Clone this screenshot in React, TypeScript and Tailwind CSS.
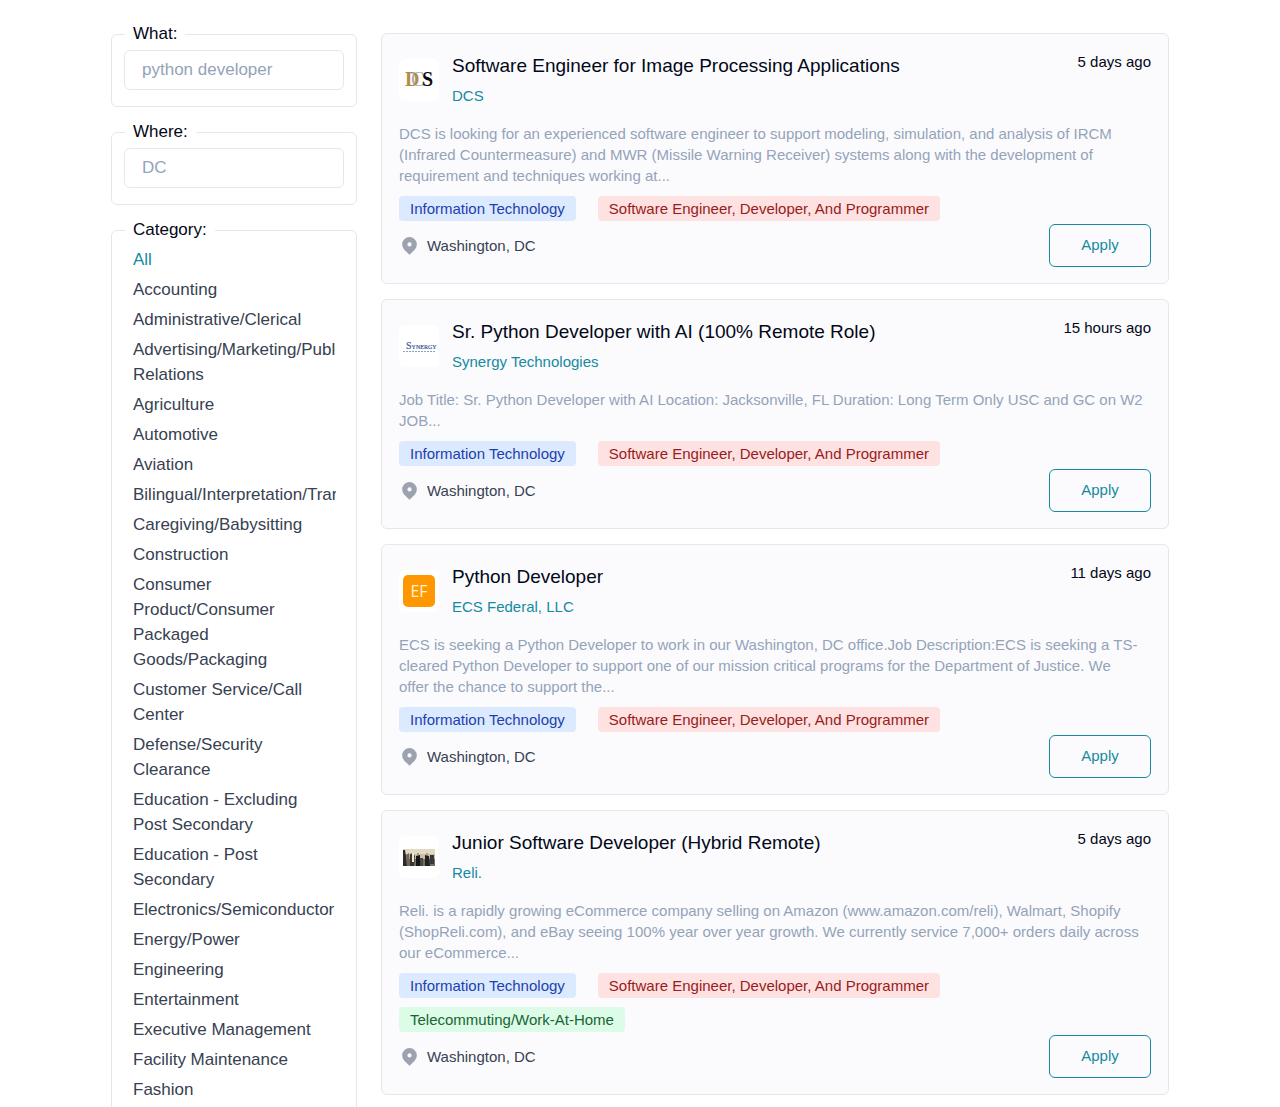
import type { ReactNode } from "react";

type Tone = "blue" | "red" | "green";

interface Job {
  title: string;
  company: string;
  age: string;
  summary: string;
  tags: { label: string; tone: Tone }[];
  location: string;
  logo: ReactNode;
}

const toneClass: Record<Tone, string> = {
  blue: "bg-[#dbeafe] text-[#1e40af]",
  red: "bg-[#fee2e2] text-[#991b1b]",
  green: "bg-[#dcfce7] text-[#166534]",
};

const categories = [
  "All",
  "Accounting",
  "Administrative/Clerical",
  "Advertising/Marketing/Public Relations",
  "Agriculture",
  "Automotive",
  "Aviation",
  "Bilingual/Interpretation/Translation",
  "Caregiving/Babysitting",
  "Construction",
  "Consumer Product/Consumer Packaged Goods/Packaging",
  "Customer Service/Call Center",
  "Defense/Security Clearance",
  "Education - Excluding Post Secondary",
  "Education - Post Secondary",
  "Electronics/Semiconductor",
  "Energy/Power",
  "Engineering",
  "Entertainment",
  "Executive Management",
  "Facility Maintenance",
  "Fashion",
];

function DcsLogo() {
  return (
    <svg viewBox="0 0 40 42" className="h-[42px] w-10" aria-label="DCS logo" role="img">
      <g fontFamily="'Liberation Serif', serif" fontWeight="bold" fontSize="20">
        <text x="6" y="27" fill="#b08d4c">D</text>
        <text x="12" y="27" fill="#8f949a" fillOpacity="0.8" fontWeight="normal">C</text>
        <text x="23" y="27" fill="#0b0b0b">S</text>
      </g>
    </svg>
  );
}

function SynergyLogo() {
  return (
    <svg viewBox="0 0 40 42" className="h-[42px] w-10" aria-label="Synergy logo" role="img">
      <text x="7" y="24" fontSize="10" fontFamily="'Liberation Serif', serif" fill="#3d5a96" stroke="#3d5a96" strokeWidth="0.2">
        S<tspan fontSize="6">YNERGY</tspan>
      </text>
      <path d="M4 26.500H36" stroke="#8ea0c6" strokeDasharray="2 1" />
    </svg>
  );
}

function EfLogo() {
  return (
    <svg viewBox="0 0 40 42" className="h-[42px] w-10" aria-label="EF logo" role="img">
      <rect x="4" y="5" width="32" height="32" rx="5" fill="#ff9800" />
      <text x="20" y="27" fontSize="16" textAnchor="middle" fontFamily="'Open Sans', sans-serif" fill="#fff3d6">EF</text>
    </svg>
  );
}

function PhotoLogo() {
  return (
    <svg viewBox="0 0 40 42" className="h-[42px] w-10" aria-label="Reli. team" role="img">
      <rect x="4" y="13" width="32" height="17" fill="#cbbfa6" />
      <rect x="4" y="13" width="32" height="5" fill="#e2d9c4" />
      <rect x="4" y="23" width="32" height="7" fill="#77705f" />
      <path d="M4 14h2l1 6 1 10H4z" fill="#2b2a27" />
      <path d="M7 19l3-2 1 13H8z" fill="#6f6655" />
      <path d="M11 18l3-1 2 3-1 10h-4z" fill="#39352f" />
      <path d="M13 17h2v9h-2z" fill="#eee9dc" />
      <path d="M17 20l4-1v11h-4z" fill="#161718" />
      <path d="M21 22h3v8h-3z" fill="#4d483f" />
      <path d="M26 19l4 1 1 10h-5z" fill="#1f2224" />
      <path d="M31 19h4v9h-4z" fill="#35393a" />
      <circle cx="19" cy="18" r="1" fill="#a98a6c" />
      <circle cx="28" cy="18" r="1" fill="#a98a6c" />
    </svg>
  );
}

function PinIcon() {
  return (
    <svg viewBox="0 0 20 20" fill="#9ca3af" className="h-[21px] w-[21px] shrink-0" aria-hidden="true">
      <path
        fillRule="evenodd"
        clipRule="evenodd"
        d="M5.050 4.050a7 7 0 119.900 9.900L10 18.900l-4.950-4.950a7 7 0 010-9.900zM10 11a2 2 0 100-4 2 2 0 000 4z"
      />
    </svg>
  );
}

const it = { label: "Information Technology", tone: "blue" as Tone };
const dev = { label: "Software Engineer, Developer, And Programmer", tone: "red" as Tone };

const jobs: Job[] = [
  {
    title: "Software Engineer for Image Processing Applications",
    company: "DCS",
    age: "5 days ago",
    summary:
      "DCS is looking for an experienced software engineer to support modeling, simulation, and analysis of IRCM (Infrared Countermeasure) and MWR (Missile Warning Receiver) systems along with the development of requirement and techniques working at...",
    tags: [it, dev],
    location: "Washington, DC",
    logo: <DcsLogo />,
  },
  {
    title: "Sr. Python Developer with AI (100% Remote Role)",
    company: "Synergy Technologies",
    age: "15 hours ago",
    summary:
      "Job Title: Sr. Python Developer with AI Location: Jacksonville, FL Duration: Long Term Only USC and GC on W2 JOB...",
    tags: [it, dev],
    location: "Washington, DC",
    logo: <SynergyLogo />,
  },
  {
    title: "Python Developer",
    company: "ECS Federal, LLC",
    age: "11 days ago",
    summary:
      "ECS is seeking a Python Developer to work in our Washington, DC office.Job Description:ECS is seeking a TS-cleared Python Developer to support one of our mission critical programs for the Department of Justice. We offer\u00a0the chance to support the...",
    tags: [it, dev],
    location: "Washington, DC",
    logo: <EfLogo />,
  },
  {
    title: "Junior Software Developer (Hybrid Remote)",
    company: "Reli.",
    age: "5 days ago",
    summary:
      "Reli. is a rapidly growing eCommerce company selling on Amazon (www.amazon.com/reli), Walmart, Shopify (ShopReli.com), and eBay seeing 100% year over year growth. We currently service 7,000+ orders daily across our eCommerce...",
    tags: [it, dev, { label: "Telecommuting/Work-At-Home", tone: "green" }],
    location: "Washington, DC",
    logo: <PhotoLogo />,
  },
];

function SearchField({ id, label, placeholder }: { id: string; label: string; placeholder: string }) {
  return (
    <fieldset className="min-w-0 rounded-md border border-gray-200 px-3 pb-4">
      <legend className="ml-px px-2 leading-[26px] text-[#020817]">
        <label htmlFor={id}>{label}</label>
      </legend>
      <input
        id={id}
        type="text"
        placeholder={placeholder}
        className="mt-[3px] block h-10 w-full rounded-md border border-gray-200 px-[17px] text-slate-700 placeholder:text-[#94a3b8]"
      />
    </fieldset>
  );
}

function JobCard({ job }: { job: Job }) {
  return (
    <article className="rounded-md border border-gray-200 bg-[#fbfbfe] px-[17px] pt-[18px] pb-4">
      <header className="flex items-start">
        <div className="mt-[7px] shrink-0 overflow-hidden rounded-md bg-white">{job.logo}</div>
        <div className="ml-[13px] min-w-0 flex-1">
          <h2 className="text-[19px] leading-7 text-[#020817]">{job.title}</h2>
          <a href="#" className="mt-[5px] block w-fit text-[15px] leading-[21px] text-[#168a9e]">
            {job.company}
          </a>
        </div>
        <time className="-mt-px text-[15px] leading-[21px] text-[#020817]">{job.age}</time>
      </header>
      <p className="mt-[17px] text-[15px] leading-[21px] text-[#94a3b8]">{job.summary}</p>
      <ul className="mt-[10px] flex flex-wrap gap-x-[22px] gap-y-[9px] text-[15px] leading-[25px]">
        {job.tags.map((tag) => (
          <li key={tag.label} className={`rounded px-[11px] ${toneClass[tag.tone]}`}>
            {tag.label}
          </li>
        ))}
      </ul>
      <footer className="mt-[3px] flex items-center justify-between">
        <p className="flex items-center gap-[7px] text-[15px] leading-[21px] text-[#374151]">
          <PinIcon />
          {job.location}
        </p>
        <button
          type="button"
          className="h-[43px] w-[102px] rounded-md border border-[#168a9e] text-[15px] text-[#168a9e]"
        >
          Apply
        </button>
      </footer>
    </article>
  );
}

export default function App() {
  return (
    <div className="h-screen overflow-hidden bg-white font-['Liberation_Sans',Arial,sans-serif] text-[17px]">
      <main className="mx-auto flex max-w-[1058px] items-start gap-6">
        <aside className="w-[246px] shrink-0 space-y-3 pt-[21px]">
          <SearchField id="what" label="What:" placeholder="python developer" />
          <SearchField id="where" label="Where:" placeholder="DC" />
          <fieldset className="min-w-0 rounded-md border border-gray-200 pr-5 pb-16 pl-[21px]">
            <legend className="-ml-2 px-2 leading-[26px] text-[#020817]">Category:</legend>
            <ul className="mt-1 space-y-[5px] overflow-hidden leading-[25px] text-[#374151]">
              {categories.map((name) => (
                <li key={name}>
                  <a href="#" className={name === "All" ? "text-[#168a9e]" : ""}>
                    {name}
                  </a>
                </li>
              ))}
            </ul>
          </fieldset>
        </aside>
        <section className="min-w-0 flex-1 space-y-[15px] pt-[33px]" aria-label="Jobs">
          {jobs.map((job) => (
            <JobCard key={job.title} job={job} />
          ))}
        </section>
      </main>
    </div>
  );
}
